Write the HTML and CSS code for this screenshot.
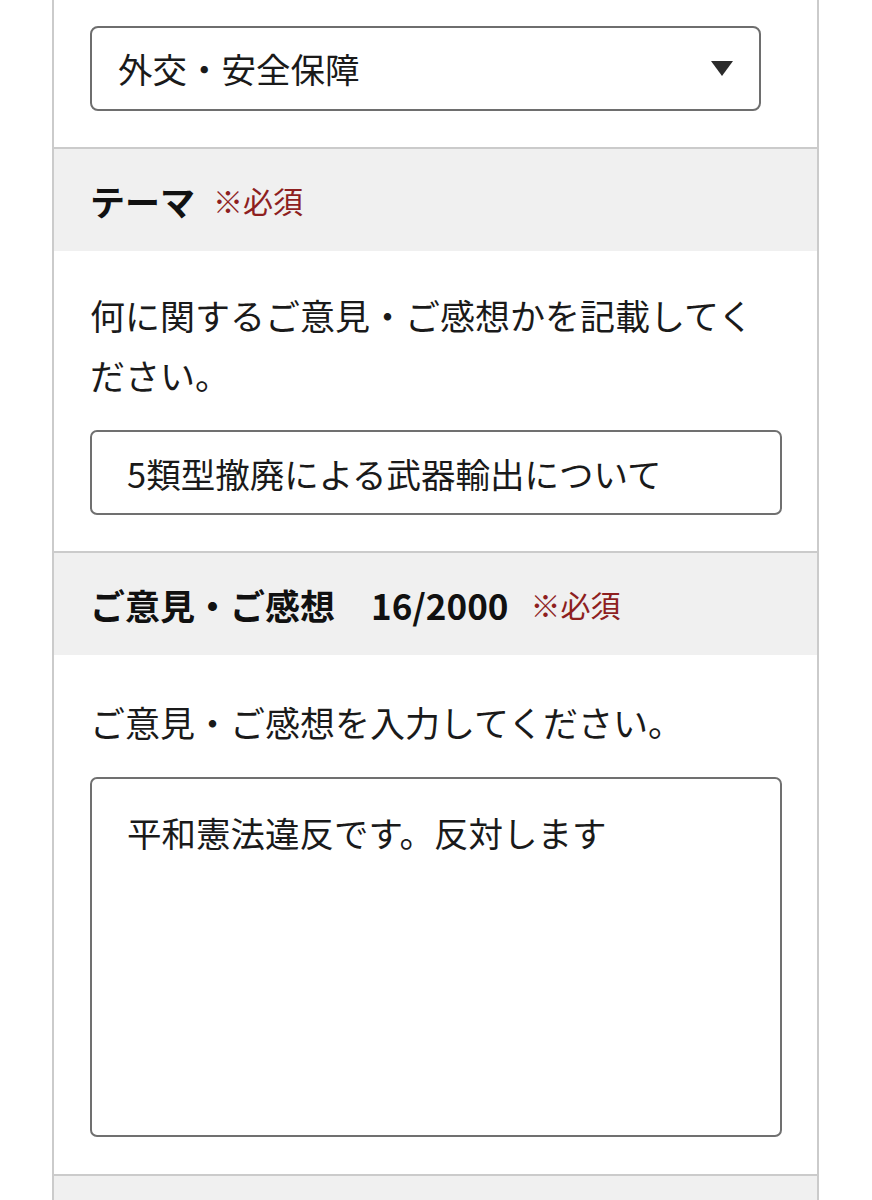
FILE: index.html
```html
<!DOCTYPE html>
<html lang="ja">
<head>
<meta charset="utf-8">
<title>ご意見・ご感想</title>
<link rel="stylesheet" href="styles.css">
</head>
<body>
<div class="page">
  <div class="section section-top">
    <div class="select-wrap">
      <select class="select">
        <option selected>外交・安全保障</option>
      </select>
      <svg class="select-arrow" width="22" height="15" viewBox="0 0 22 15" aria-hidden="true"><path d="M0 0H22L11 15Z" fill="#2b2b2b"/></svg>
    </div>
  </div>

  <div class="field-head">
    <span class="field-title">テーマ</span><span class="required">※必須</span>
  </div>
  <div class="section">
    <p class="hint">何に関するご意見・ご感想かを記載してください。</p>
    <input class="text-input" type="text" value="5類型撤廃による武器輸出について">
  </div>

  <div class="field-head">
    <span class="field-title">ご意見・ご感想</span><span class="field-count">16/2000</span><span class="required">※必須</span>
  </div>
  <div class="section section-last">
    <p class="hint">ご意見・ご感想を入力してください。</p>
    <textarea class="text-area">平和憲法違反です。反対します</textarea>
  </div>

  <div class="field-head field-head-end"></div>
</div>
</body>
</html>
```

FILE: styles.css
```css
html, body {
  margin: 0;
  padding: 0;
  background: #ffffff;
}

body {
  font-family: "Noto Sans CJK JP", "Noto Sans", sans-serif;
  color: #1a1a1a;
  font-size: 35px;
}

.page {
  box-sizing: border-box;
  width: 767px;
  margin-left: 52px;
  border-left: 2px solid #cbcbcb;
  border-right: 2px solid #cbcbcb;
  min-height: 1200px;
  background: #ffffff;
}

.section {
  padding: 34px 35px 36px 36px;
  border-bottom: 2px solid #cbcbcb;
}

.section-top {
  padding-top: 26px;
}

.section-last {
  padding-top: 37px;
  padding-bottom: 37px;
}

.select-wrap {
  position: relative;
  width: 671px;
}

.select {
  appearance: none;
  -webkit-appearance: none;
  box-sizing: border-box;
  display: block;
  width: 671px;
  height: 85px;
  margin: 0;
  padding: 0 60px 0 26px;
  border: 2px solid #6e6e6e;
  border-radius: 8px;
  background: #ffffff;
  font-family: "Noto Sans CJK JP", "Noto Sans", sans-serif;
  font-size: 34.5px;
  color: #1a1a1a;
  line-height: 81px;
}

.select-arrow {
  position: absolute;
  right: 28px;
  top: 35px;
}

.field-head {
  box-sizing: border-box;
  height: 102px;
  padding: 0 36px;
  background: #f0f0f0;
  display: flex;
  align-items: center;
}

.field-head-end {
  height: 60px;
}

.field-title {
  font-weight: 700;
  font-size: 35px;
  color: #111111;
}

.field-count {
  font-weight: 700;
  font-size: 35px;
  color: #111111;
  margin-left: 36px;
  margin-right: 4px;
}

.required {
  font-size: 30px;
  color: #8e1f1f;
  margin-left: 18px;
}

.hint {
  margin: 0 0 25px 0;
  line-height: 60px;
  font-size: 35px;
}

.text-input {
  box-sizing: border-box;
  display: block;
  width: 692px;
  height: 85px;
  margin: 0;
  padding: 0 20px 0 35px;
  border: 2px solid #707070;
  border-radius: 7px;
  background: #ffffff;
  font-family: "Noto Sans CJK JP", "Noto Sans", sans-serif;
  font-size: 34.5px;
  color: #1a1a1a;
  outline: none;
}

.text-area {
  box-sizing: border-box;
  display: block;
  width: 692px;
  height: 360px;
  margin: 0;
  padding: 23px 20px 0 35px;
  border: 2px solid #707070;
  border-radius: 7px;
  background: #ffffff;
  font-family: "Noto Sans CJK JP", "Noto Sans", sans-serif;
  font-size: 34.5px;
  line-height: 60px;
  color: #1a1a1a;
  resize: none;
  outline: none;
}
```
